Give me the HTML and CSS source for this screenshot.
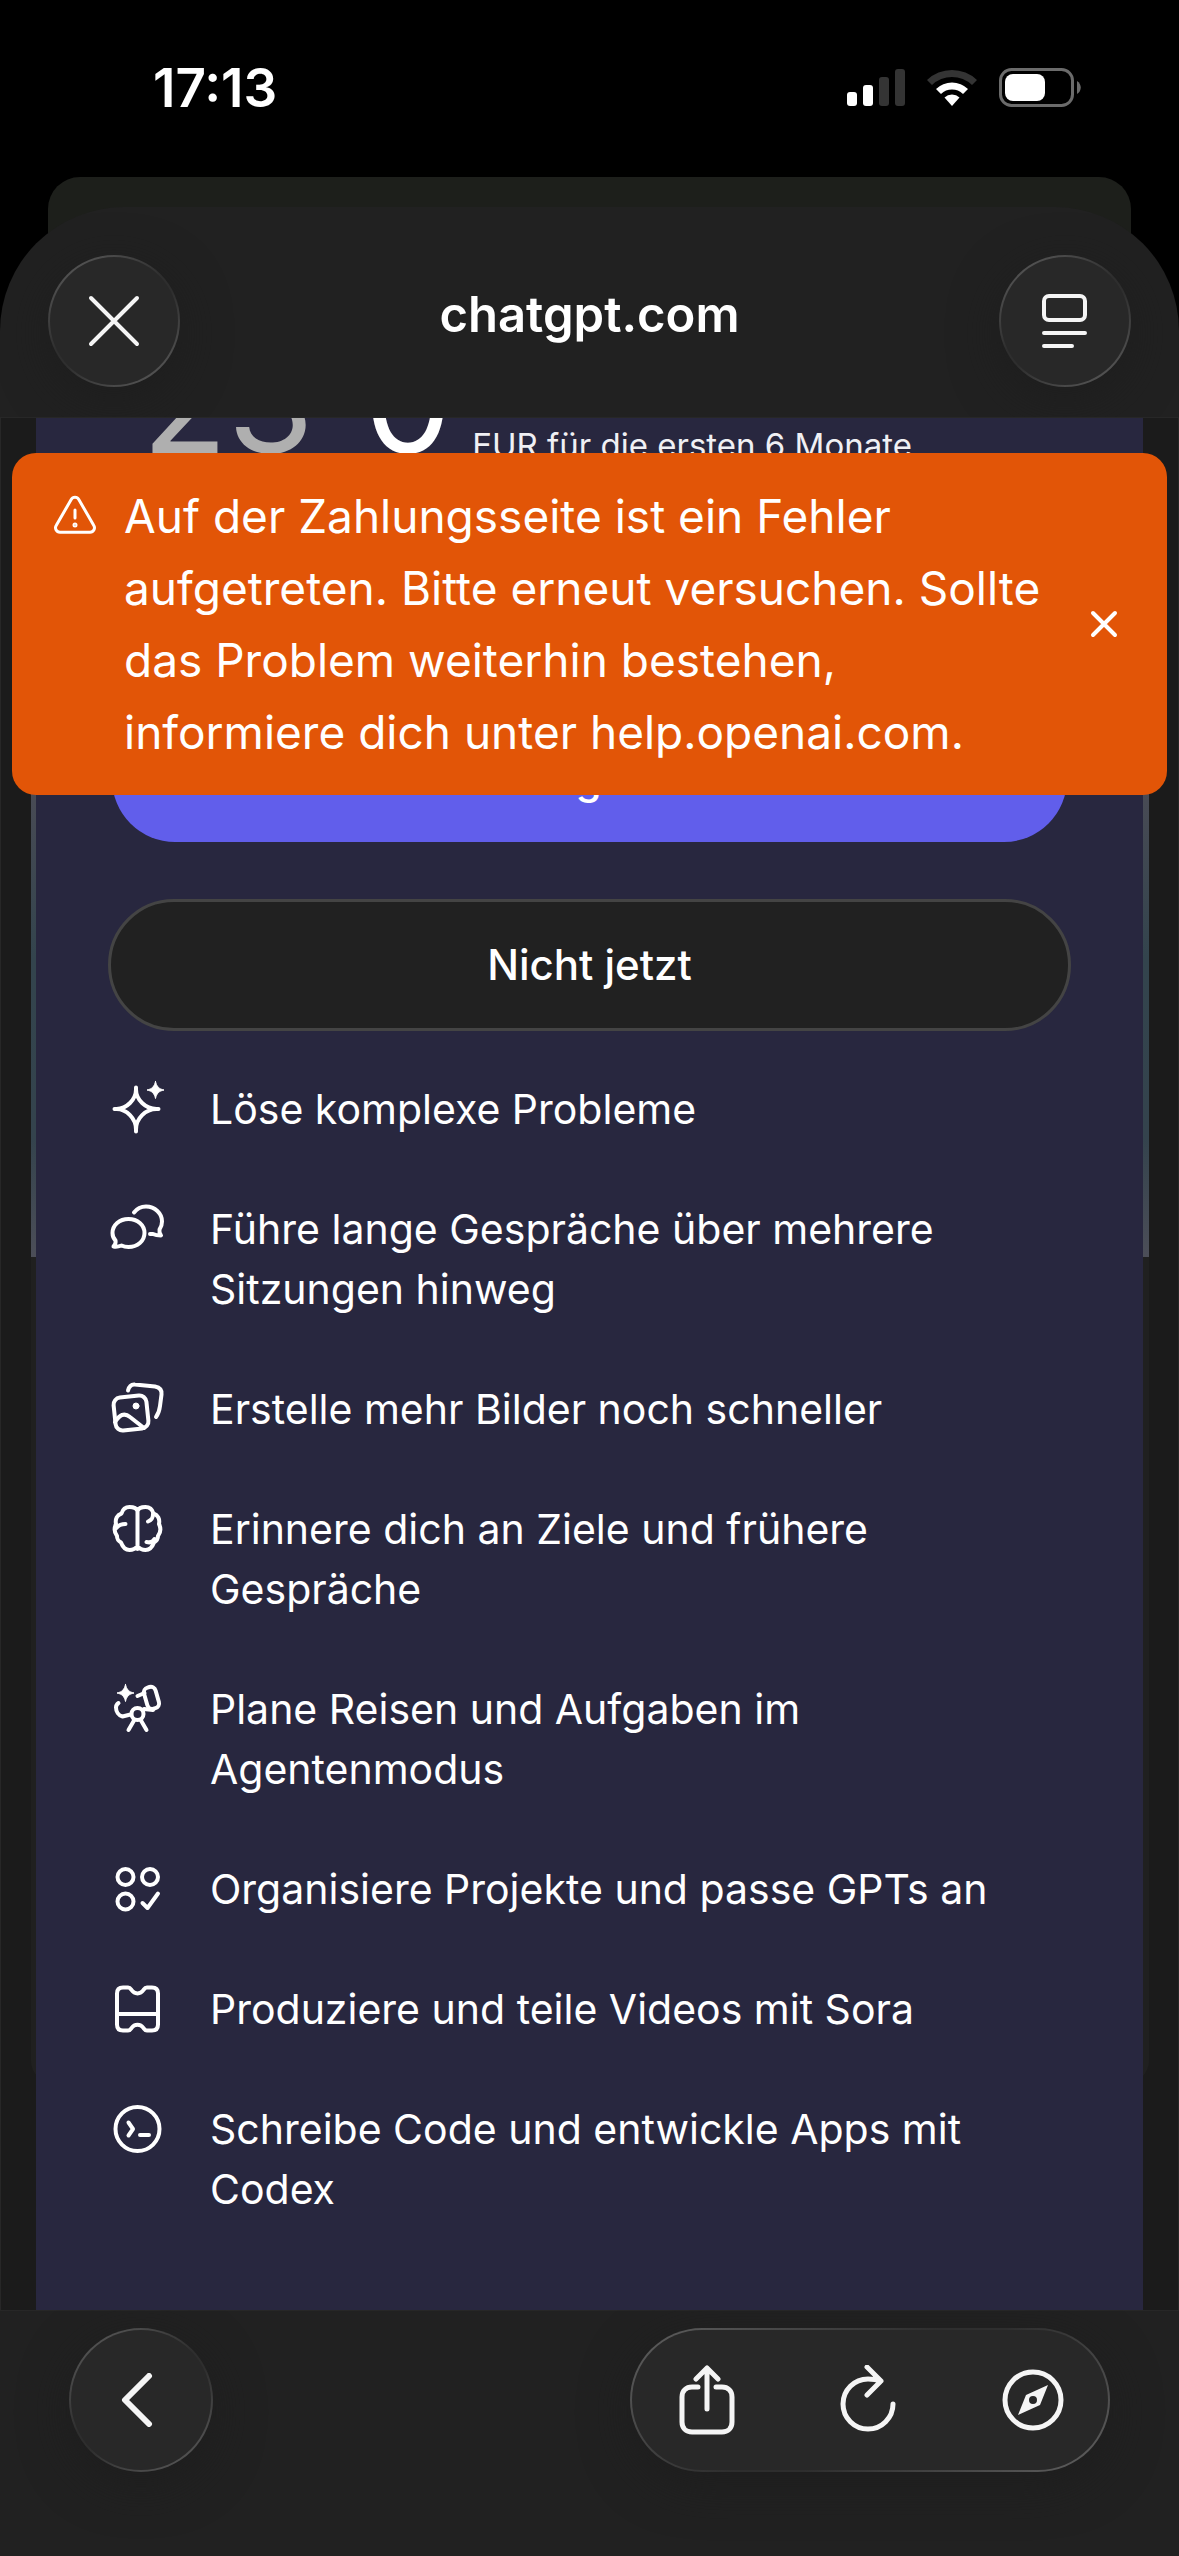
FILE: index.html
```html
<!DOCTYPE html>
<html lang="de">
<head>
<meta charset="utf-8">
<meta name="viewport" content="width=device-width, initial-scale=1">
<title>chatgpt.com</title>
<link rel="stylesheet" href="styles.css">
</head>
<body>
<div class="screen">
  <div class="status-bar">
    <time class="clock">17:13</time>
    <div class="status-icons">
      <svg width="58" height="38" viewBox="0 0 58 38" aria-hidden="true">
        <rect x="0" y="23" width="10" height="14" rx="3" fill="#fff"/>
        <rect x="16" y="16" width="10" height="21" rx="3" fill="#fff"/>
        <rect x="32" y="8" width="10" height="29" rx="3" fill="#343434"/>
        <rect x="48" y="0" width="10" height="37" rx="3" fill="#343434"/>
      </svg>
      <svg width="50" height="38" viewBox="0 0 50 38" aria-hidden="true">
        <path d="M0 11a36 36 0 0 1 50 0l-5 5a29 29 0 0 0-40 0z" fill="#343434"/>
        <path d="M9 20a23 23 0 0 1 32 0l-5 5a16 16 0 0 0-22 0z" fill="#fff"/>
        <path d="M17.500 28.500a11 11 0 0 1 15 0L25 37z" fill="#fff"/>
      </svg>
      <svg width="82" height="40" viewBox="0 0 82 40" aria-hidden="true">
        <rect x="1.500" y="1.500" width="72" height="36" rx="11" fill="none" stroke="#6b6b6b" stroke-width="3"/>
        <rect x="6" y="6" width="40" height="27" rx="8" fill="#fff"/>
        <path d="M78 13c5 3 5 10 0 13z" fill="#6b6b6b"/>
      </svg>
    </div>
  </div>

  <div class="sheet-back"></div>
  <div class="sheet">
    <header class="sheet-header">
      <button class="glass round" type="button" aria-label="Schließen">
        <svg width="52" height="52" viewBox="0 0 52 52"><path d="M3 3l46 46M49 3L3 49" /></svg>
      </button>
      <h1 class="site">chatgpt.com</h1>
      <button class="glass round" type="button" aria-label="Leseansicht">
        <svg width="46" height="54" viewBox="0 0 46 54"><rect x="2" y="2" width="41" height="24" rx="5"/><path d="M2 39h41M2 52h28"/></svg>
      </button>
    </header>

    <main class="viewport">
      <div class="alert" role="alert">
        <svg class="alert-icon" width="44" height="40" viewBox="0 0 44 40" aria-hidden="true">
          <path d="M18.200 4.500a4.400 4.400 0 0 1 7.600 0l15 26a4.400 4.400 0 0 1-3.800 6.700H7a4.400 4.400 0 0 1-3.800-6.700z"/>
          <path d="M22 15v8"/><circle cx="22" cy="30" r="1"/>
        </svg>
        <p class="alert-text">Auf der Zahlungsseite ist ein Fehler aufgetreten. Bitte erneut versuchen. Sollte das Problem weiterhin bestehen, informiere dich unter help.openai.com.</p>
        <button class="alert-close" type="button" aria-label="Meldung schließen">
          <svg width="28" height="28" viewBox="0 0 28 28"><path d="M3 3l22 22M25 3L3 25"/></svg>
        </button>
      </div>

      <section class="plan">
        <div class="price">
          <s class="price-old">23</s>
          <span class="price-new">0</span>
          <span class="price-note">EUR für die ersten 6 Monate</span>
        </div>
        <button class="cta primary" type="button">Kostenloses Angebot annehmen</button>
        <button class="cta secondary" type="button">Nicht jetzt</button>
        <ul class="features">
          <li>
            <svg viewBox="0 0 60 60"><path d="M28 8.500v2c0 10-9.500 19.500-19.500 19.500h-2 2C18.500 30 28 39.500 28 50.500v2-2C28 39.500 37.500 30 48.500 30h2-2C37.500 30 28 20.500 28 10.500z"/><path class="solid" d="M47.500 2.500c1 5 3.500 7.500 8.500 8.500-5 1-7.500 3.500-8.500 8.500-1-5-3.500-7.500-8.500-8.500 5-1 7.500-3.500 8.500-8.500z"/></svg>
            <span>Löse komplexe Probleme</span>
          </li>
          <li>
            <svg viewBox="0 0 60 60"><path d="M20.500 20c9 0 16 6 16 14s-7 14-16 14c-3 0-5-.5-7-1.500-2.500 1-5 1.500-8 1 1.500-1.500 2.500-3.500 2-6-2-2-3-4.500-3-7.500 0-8 7-14 16-14z"/><path d="M26 13.500C29 9.500 33 7.500 38 7.500c9 0 16 7 16 15 0 3-1 6-2.500 8-.5 2.500 0 4 1.500 6-3 0-6-.5-8-1.500h-3"/></svg>
            <span>Führe lange Gespräche über mehrere Sitzungen hinweg</span>
          </li>
          <li>
            <svg viewBox="0 0 60 60"><rect x="6.500" y="17.500" width="33" height="33" rx="7" transform="rotate(-6 23 34)"/><path d="M7 43c2-3 4-6 7-7 3-1 5-.5 8 2l14 11"/><circle class="solid" cx="28" cy="27" r="3"/><path d="M20 11.500c1-4 3-6.500 7-6l20 2c5 1 7 4 6.500 8L52 27c-.5 4-1 7-4 11"/></svg>
            <span>Erstelle mehr Bilder noch schneller</span>
          </li>
          <li>
            <svg viewBox="0 0 60 60"><path d="M29.500 10v40M29.500 12c-1-3-4-4-8-4-4.500 0-7 3-8 6.500C9 16 7 20 8 25c-2 4-2 8 1 12 0 4 1.500 5 4 6.500 1.500 4 4 7.500 8.500 7.500 4 0 6.500-2 8-4 1.500 2 4 4 8 4 4.500 0 7-3.500 8.500-7.500 2.500-1.500 4-3.500 4-6.500 3-4 3-8 1-12 1-5-1-9-5.500-10.500C44.500 11 42 8 37.500 8c-4 0-7 1-8 4"/><path d="M8.500 29c2-3 5-4 9-4M45 15c0 4-1 6-5 7.500M38.500 43c4 1 6.500 0 8-3"/></svg>
            <span>Erinnere dich an Ziele und frühere Gespräche</span>
          </li>
          <li>
            <svg viewBox="0 0 60 60"><circle cx="29.500" cy="35" r="6"/><path d="M26 41.500L20.500 51M33 41.500l5.500 9.500M22.500 35.500l-8 2c-4-1-6.500-5-6.500-9 0-2 1-3.500 2.500-4.500M29.500 17l7-3M36 30l9 1"/><rect x="37.500" y="8" width="12" height="22" rx="5" transform="rotate(-16 43 19)"/><path class="solid" d="M17.500 5.500c1 5 3.500 7.500 8.500 8.500-5 1-7.500 3.500-8.500 8.500-1-5-3.500-7.500-8.500-8.500 5-1 7.500-3.500 8.500-8.500z"/></svg>
            <span>Plane Reisen und Aufgaben im Agentenmodus</span>
          </li>
          <li>
            <svg viewBox="0 0 60 60"><circle cx="17.500" cy="18" r="8"/><circle cx="42" cy="18" r="8"/><circle cx="17.500" cy="42.500" r="8"/><path d="M34.500 44l5 5L50 34.500"/></svg>
            <span>Organisiere Projekte und passe GPTs an</span>
          </li>
          <li>
            <svg viewBox="0 0 60 60"><path d="M15 8.500h5c2 0 2.500 1 3.500 2.500 3 4.500 9 4.500 12 0 1-1.500 1.500-2.500 3.500-2.500h5c4 0 6 2 6 6v31c0 4-2 6-6 6h-5c-2 0-2.500-1-3.500-2.500-3-4.500-9-4.500-12 0-1 1.500-1.500 2.500-3.500 2.500h-5c-4 0-6-2-6-6v-31c0-4 2-6 6-6zM9 35h41"/></svg>
            <span>Produziere und teile Videos mit Sora</span>
          </li>
          <li>
            <svg viewBox="0 0 60 60"><circle cx="29.500" cy="30" r="22"/><path d="M20.500 23.500l4.500 6.500-4.500 6.500M32 36h9"/></svg>
            <span>Schreibe Code und entwickle Apps mit Codex</span>
          </li>
        </ul>
      </section>
    </main>

    <footer class="toolbar">
      <button class="glass back" type="button" aria-label="Zurück">
        <svg width="32" height="54" viewBox="0 0 32 54"><path d="M28 3L4 27l24 24"/></svg>
      </button>
      <div class="glass actions">
        <button type="button" aria-label="Teilen">
          <svg width="56" height="70" viewBox="0 0 56 70"><path d="M19 22h-6c-6 0-10 4-10 10v25c0 6 4 10 10 10h30c6 0 10-4 10-10V32c0-6-4-10-10-10h-6M28 44V3M17 14L28 3l11 11"/></svg>
        </button>
        <button type="button" aria-label="Neu laden">
          <svg width="58" height="70" viewBox="0 0 58 70"><path d="M53 39a25 25 0 1 1-25-25q7 0 13 2M27 2l14 14-14 14"/></svg>
        </button>
        <button type="button" aria-label="In Safari öffnen">
          <svg width="62" height="62" viewBox="0 0 62 62"><circle cx="31" cy="31" r="28"/><path class="needle" fill-rule="evenodd" d="M46 16L38 36 16 46 24 26zM31 27a4 4 0 1 0 0 8 4 4 0 0 0 0-8z"/></svg>
        </button>
      </div>
    </footer>
  </div>
</div>
</body>
</html>
```

FILE: styles.css
```css
* {
  box-sizing: border-box;
}

body {
  margin: 0;
  background: #000;
  color: #fff;
  font-family: Inter, "Liberation Sans", sans-serif;
}

button {
  margin: 0;
  padding: 0;
  border: 0;
  background: none;
  color: inherit;
  font: inherit;
}

svg {
  display: block;
  flex: none;
  fill: none;
  stroke: #fff;
  stroke-width: 4;
  stroke-linecap: round;
  stroke-linejoin: round;
}

.screen {
  display: flex;
  flex-direction: column;
  min-height: 100vh;
}

/* Status bar */
.status-bar {
  display: flex;
  align-items: center;
  justify-content: space-between;
  height: 177px;
  padding: 0 98px 2px 153px;
}

.clock {
  font-size: 53px;
  font-weight: 600;
  line-height: 60px;
}

.status-icons {
  display: flex;
  align-items: center;
  gap: 22px;
}

.status-icons svg {
  stroke: none;
}

/* Stacked sheets */
.sheet-back {
  height: 120px;
  margin: 0 48px -90px;
  border-radius: 32px 32px 0 0;
  background: #1d1f1b;
}

.sheet {
  position: relative;
  display: flex;
  flex: 1;
  flex-direction: column;
  overflow: hidden;
  border-radius: 124px 124px 0 0;
  background: #212121;
}

.sheet-header {
  display: flex;
  align-items: center;
  justify-content: space-between;
  height: 210px;
  padding: 18px 48px 0;
}

.site {
  margin: 0 0 12px;
  font-size: 49px;
  font-weight: 600;
  line-height: 60px;
}

.glass {
  display: flex;
  align-items: center;
  justify-content: center;
  border: 2px solid transparent;
  background:
    linear-gradient(#282828, #282828) padding-box,
    linear-gradient(145deg, #606060, #2e2e2e 45%, #2e2e2e 55%, #606060) border-box;
  box-shadow: 0 12px 48px #1e1e1e;
}

.round {
  width: 132px;
  height: 132px;
  border-radius: 50%;
}

/* Web content */
.viewport {
  position: relative;
  display: flex;
  flex: 1;
  flex-direction: column;
  padding: 0 35px;
  overflow: hidden;
  border: solid #272727;
  border-width: 1px 1px 0;
  background: #1b1b1b;
}

/* Glowing rim of the card behind the plan */
.viewport::before {
  position: absolute;
  top: 60px;
  bottom: 226px;
  left: 30px;
  right: 29px;
  border-radius: 0 0 24px 24px;
  background: linear-gradient(#4a4b55 300px, #33444d 480px, #34434d 660px, #4c4e58 779px, #202020 779px);
  content: "";
}

.plan {
  position: relative;
  display: flex;
  flex: 1;
  flex-direction: column;
  padding: 0 72px 48px;
  background: #28273f;
}

.price {
  display: flex;
  align-items: flex-end;
  height: 160px;
  margin-top: -96px;
  padding-left: 34px;
  line-height: 160px;
  white-space: nowrap;
}

.price-old,
.price-new {
  font-size: 140px;
}

.price-old {
  margin-right: 50px;
  color: #afafaf;
  text-decoration: none;
}

.price-new {
  margin-right: 20px;
}

.price-note {
  color: #f0f0f4;
  font-size: 33px;
  line-height: 74px;
}

.cta {
  flex: none;
  border-radius: 66px;
  font-size: 42px;
  font-weight: 500;
  line-height: 60px;
}

.primary {
  height: 126px;
  margin: 234px 4px 57px;
  background: #615eeb;
}

.secondary {
  height: 132px;
  border: 3px solid #444;
  background: #212121;
}

.features {
  display: flex;
  flex-direction: column;
  gap: 60px;
  margin: 0;
  padding: 48px 0 0;
  list-style: none;
}

.features li {
  display: flex;
  gap: 42px;
  font-size: 41px;
  line-height: 60px;
}

.features svg {
  width: 60px;
  height: 60px;
}

.features .solid {
  fill: #fff;
  stroke-width: 1;
}

/* Error banner */
.alert {
  position: absolute;
  z-index: 1;
  top: 35px;
  left: 11px;
  right: 11px;
  display: flex;
  gap: 27px;
  padding: 27px 49px 27px 41px;
  border-radius: 24px;
  background: #e25507;
}

.alert-icon {
  margin-top: 15px;
  stroke-width: 3;
}

.alert-text {
  flex: 1;
  margin: 0;
  font-size: 46px;
  line-height: 72px;
}

.alert-close {
  align-self: center;
}

/* Browser toolbar */
.toolbar {
  display: flex;
  align-items: flex-start;
  justify-content: space-between;
  height: 246px;
  padding: 17px 69px 0;
  border-top: 1px solid #272727;
}

.glass svg {
  stroke: #f5f5f5;
  stroke-width: 5;
}

.round svg {
  stroke-width: 4;
}

.back {
  width: 144px;
  height: 144px;
  padding-right: 8px;
  border-radius: 50%;
}

.back svg {
  stroke-width: 6;
}

.actions {
  width: 480px;
  height: 144px;
  justify-content: space-between;
  padding: 0 44px 0 47px;
  border-radius: 72px;
}

.glass .needle {
  fill: #f5f5f5;
  stroke: none;
}
```
